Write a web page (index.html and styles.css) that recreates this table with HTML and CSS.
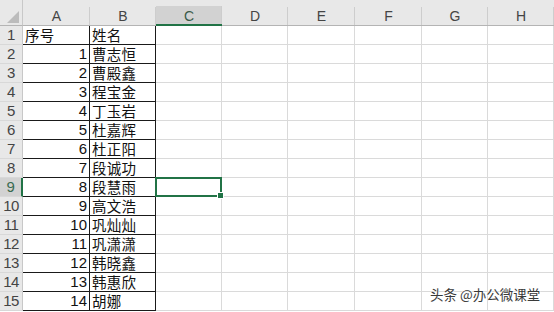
FILE: index.html
```html
<!DOCTYPE html>
<html lang="zh">
<head>
<meta charset="utf-8">
<title>Sheet</title>
<link rel="stylesheet" href="styles.css">
</head>
<body>
<div class="sheet">
  <div class="corner"></div>
  <div class="ch">A</div><div class="ch">B</div><div class="ch sel">C</div><div class="ch">D</div><div class="ch">E</div><div class="ch">F</div><div class="ch">G</div><div class="ch">H</div>

  <div class="rh">1</div><div class="c d txt">序号</div><div class="c d txt">姓名</div><div class="c"></div><div class="c"></div><div class="c"></div><div class="c"></div><div class="c"></div><div class="c"></div>
  <div class="rh">2</div><div class="c d num">1</div><div class="c d txt">曹志恒</div><div class="c"></div><div class="c"></div><div class="c"></div><div class="c"></div><div class="c"></div><div class="c"></div>
  <div class="rh">3</div><div class="c d num">2</div><div class="c d txt">曹殿鑫</div><div class="c"></div><div class="c"></div><div class="c"></div><div class="c"></div><div class="c"></div><div class="c"></div>
  <div class="rh">4</div><div class="c d num">3</div><div class="c d txt">程宝金</div><div class="c"></div><div class="c"></div><div class="c"></div><div class="c"></div><div class="c"></div><div class="c"></div>
  <div class="rh">5</div><div class="c d num">4</div><div class="c d txt">丁玉岩</div><div class="c"></div><div class="c"></div><div class="c"></div><div class="c"></div><div class="c"></div><div class="c"></div>
  <div class="rh">6</div><div class="c d num">5</div><div class="c d txt">杜嘉辉</div><div class="c"></div><div class="c"></div><div class="c"></div><div class="c"></div><div class="c"></div><div class="c"></div>
  <div class="rh">7</div><div class="c d num">6</div><div class="c d txt">杜正阳</div><div class="c"></div><div class="c"></div><div class="c"></div><div class="c"></div><div class="c"></div><div class="c"></div>
  <div class="rh">8</div><div class="c d num">7</div><div class="c d txt">段诚功</div><div class="c"></div><div class="c"></div><div class="c"></div><div class="c"></div><div class="c"></div><div class="c"></div>
  <div class="rh sel">9</div><div class="c d num">8</div><div class="c d txt">段慧雨</div><div class="c active"></div><div class="c"></div><div class="c"></div><div class="c"></div><div class="c"></div><div class="c"></div>
  <div class="rh">10</div><div class="c d num">9</div><div class="c d txt">高文浩</div><div class="c"></div><div class="c"></div><div class="c"></div><div class="c"></div><div class="c"></div><div class="c"></div>
  <div class="rh">11</div><div class="c d num">10</div><div class="c d txt">巩灿灿</div><div class="c"></div><div class="c"></div><div class="c"></div><div class="c"></div><div class="c"></div><div class="c"></div>
  <div class="rh">12</div><div class="c d num">11</div><div class="c d txt">巩潇潇</div><div class="c"></div><div class="c"></div><div class="c"></div><div class="c"></div><div class="c"></div><div class="c"></div>
  <div class="rh">13</div><div class="c d num">12</div><div class="c d txt">韩晓鑫</div><div class="c"></div><div class="c"></div><div class="c"></div><div class="c"></div><div class="c"></div><div class="c"></div>
  <div class="rh">14</div><div class="c d num">13</div><div class="c d txt">韩惠欣</div><div class="c"></div><div class="c"></div><div class="c"></div><div class="c"></div><div class="c"></div><div class="c"></div>
  <div class="rh">15</div><div class="c d num">14</div><div class="c d txt">胡娜</div><div class="c"></div><div class="c"></div><div class="c"></div><div class="c"></div><div class="c"></div><div class="c"></div>
</div>
<div class="watermark">头条 @办公微课堂</div>
</body>
</html>
```

FILE: styles.css
```css
* { box-sizing: border-box; }
html, body { margin: 0; padding: 0; background: #ffffff; }
body {
  width: 554px;
  height: 312px;
  overflow: hidden;
  position: relative;
  font-family: "Liberation Sans", "Noto Sans CJK SC", sans-serif;
}
.sheet {
  display: grid;
  grid-template-columns: 23px 67px 66px 66px 66px 67px 67px 66px 66px;
  grid-template-rows: 26px repeat(15, 19px);
}
.corner {
  position: relative;
  background: #e8e8e8;
  border-right: 1px solid #c8c8c8;
  border-bottom: 1px solid #b4b4b4;
}
.corner::after {
  content: "";
  position: absolute;
  right: 3px;
  bottom: 2px;
  width: 12px;
  height: 12px;
  background: #bcbcbc;
  clip-path: polygon(100% 0, 100% 100%, 0 100%);
}
.ch {
  background:
    linear-gradient(to right, transparent calc(100% - 1px), #cdcdcd 0) right bottom / 100% 18px no-repeat,
    #e8e8e8;
  border-bottom: 1px solid #b4b4b4;
  color: #444;
  font-size: 14px;
  line-height: 18px;
  padding-top: 7px;
  text-align: center;
}
.ch.sel {
  background:
    linear-gradient(to right, #d2d2d2 calc(100% - 1px), #cdcdcd 0) right bottom / 100% 18px no-repeat,
    #e8e8e8;
  border-bottom: 2px solid #217346;
  color: #3a5a48;
}
.rh {
  background: #e8e8e8;
  border-right: 1px solid #c8c8c8;
  border-bottom: 1px solid #d8d8d8;
  color: #444;
  font-size: 15px;
  line-height: 18px;
  text-align: center;
  letter-spacing: -0.5px;
}
.rh.sel {
  background: #d2d2d2;
  border-right: 2px solid #217346;
  color: #3a6a50;
}
.c {
  border-right: 1px solid #dadada;
  border-bottom: 1px solid #dadada;
  font-size: 15px;
  line-height: 18px;
  color: #111;
  white-space: nowrap;
}
.c.d {
  border-right-color: #1a1a1a;
  border-bottom-color: #1a1a1a;
}
.txt {
  font-family: "Noto Sans CJK SC", sans-serif;
  font-size: 14.5px;
  padding-left: 2px;
  letter-spacing: 0.3px;
}
.num { text-align: right; padding-right: 2px; }
.active { position: relative; }
.active::before {
  content: "";
  position: absolute;
  left: -1px;
  top: -1px;
  right: -1px;
  bottom: -1px;
  border: 2px solid #217346;
}
.active::after {
  content: "";
  position: absolute;
  right: -3px;
  bottom: -3px;
  width: 5px;
  height: 5px;
  background: #217346;
  border: 1px solid #ffffff;
}
.watermark {
  position: absolute;
  left: 430px;
  top: 285px;
  font-family: "Noto Sans CJK SC", sans-serif;
  font-size: 13.5px;
  line-height: 18px;
  color: #3a3a3a;
  text-shadow: 0 0 2px #fff, 0 0 2px #fff, 0 0 1px #fff;
  white-space: nowrap;
}
```
